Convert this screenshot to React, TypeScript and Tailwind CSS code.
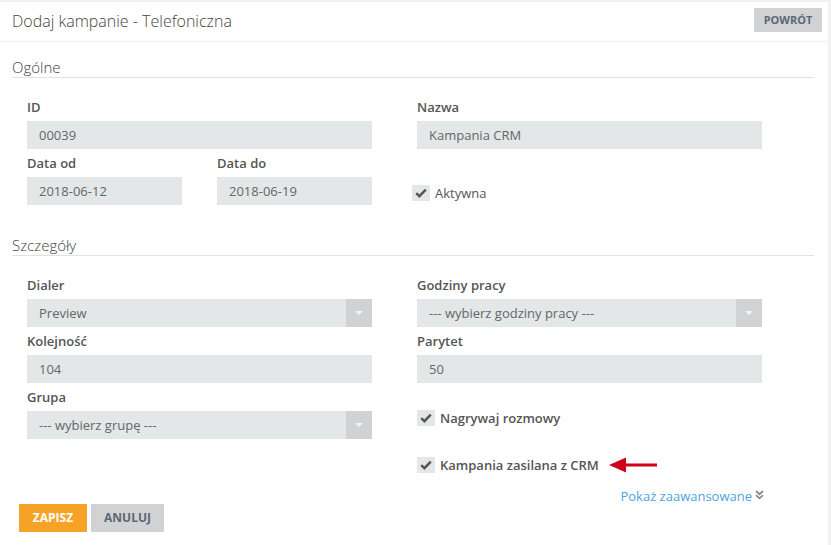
import React from "react";

const font = { fontFamily: '"Open Sans", "Noto Sans", sans-serif' };

function Check() {
  return (
    <svg width="12" height="10" viewBox="0 0 12 10" className="block">
      <path d="M1.2 5.2 L4.4 8.2 L10.8 1.6" fill="none" stroke="#555" strokeWidth="2.4" strokeLinecap="butt" strokeLinejoin="miter" />
    </svg>
  );
}

function Checkbox({ label, bold, shift }: { label: string; bold?: boolean; shift?: boolean }) {
  return (
    <div className={"flex h-[22px] items-center " + (shift ? "-ml-[5px]" : "")}>
      <div className="flex h-[16px] w-[18px] items-center justify-center bg-[#e4e7e8]">
        <Check />
      </div>
      <span className={"ml-[5px] pt-[1px] text-[13px] text-[#555] " + (bold ? "font-semibold" : "font-normal")}>{label}</span>
    </div>
  );
}

function Field({ label, value, select, w }: { label: string; value: string; select?: boolean; w?: string }) {
  return (
    <div className={"flex flex-col " + (w ?? "")}>
      <div className="flex h-[28px] items-center pt-[2px] text-[13px] font-semibold text-[#555]">{label}</div>
      <div className="flex h-[28px] items-center bg-[#e4e7e8]">
        <span className="flex-1 pl-[12px] pt-[2px] text-[13px] text-[#666]">{value}</span>
        {select && (
          <div className="flex h-[28px] w-[26px] items-center justify-center bg-[#d0d2d3]">
            <svg width="8" height="4" viewBox="0 0 8 4" className="block">
              <path d="M0 0 L8 0 L4 4 Z" fill="#f4f4f4" />
            </svg>
          </div>
        )}
      </div>
    </div>
  );
}

function Heading({ children }: { children: React.ReactNode }) {
  return (
    <div className="h-[21px] border-b border-[#e2e2e2] text-[15px] font-light leading-[20px] text-[#444]">{children}</div>
  );
}

export default function App() {
  return (
    <div className="flex min-h-[545px] bg-[#f1f1f1] pt-[2px]" style={font}>
      <div className="w-[828px] bg-white">
        <div className="flex h-[40px] items-start justify-between border-b border-[#f0f0f0] pl-[12px] pr-[6px] pt-[6px]">
          <div className="mt-[3px] text-[16px] font-light leading-[20px] text-[#444]">Dodaj kampanie - Telefoniczna</div>
          <button className="flex h-[24px] w-[68px] items-center justify-center bg-[#d1d2d3] text-[11px] font-bold text-[#5b6877]">
            POWRÓT
          </button>
        </div>

        <div className="pl-[12px] pr-[14px]">
          <div className="mt-[15px]">
            <Heading>Ogólne</Heading>
          </div>
          <div className="mt-[15px] grid grid-cols-[345px_345px] gap-x-[45px] pl-[15px]">
            <div className="flex flex-col">
              <Field label="ID" value="00039" />
              <div className="flex gap-[35px]">
                <Field label="Data od" value="2018-06-12" w="w-[155px]" />
                <Field label="Data do" value="2018-06-19" w="w-[155px]" />
              </div>
            </div>
            <div className="flex flex-col">
              <Field label="Nazwa" value="Kampania CRM" />
              <div className="mt-[33px]">
                <Checkbox label="Aktywna" shift />
              </div>
            </div>
          </div>

          <div className="mt-[30px]">
            <Heading>Szczegóły</Heading>
          </div>
          <div className="mt-[15px] grid grid-cols-[345px_345px] gap-x-[45px] pl-[15px]">
            <div className="flex flex-col">
              <Field label="Dialer" value="Preview" select />
              <Field label="Kolejność" value="104" />
              <Field label="Grupa" value="--- wybierz grupę ---" select />
            </div>
            <div className="flex flex-col">
              <Field label="Godziny pracy" value="--- wybierz godziny pracy ---" select />
              <Field label="Parytet" value="50" />
              <div className="mt-[24px]">
                <Checkbox label="Nagrywaj rozmowy" bold />
              </div>
              <div className="mt-[25px] flex items-center">
                <Checkbox label="Kampania zasilana z CRM" bold />
                <svg width="48" height="16" viewBox="0 0 48 16" className="ml-[10px] block">
                  <path d="M0 8 L17 0.5 L17 15.5 Z" fill="#d0021b" />
                  <rect x="16" y="6.5" width="32" height="3" fill="#d0021b" />
                </svg>
              </div>
              <div className="mt-[10px] -mr-[2px] flex h-[18px] items-center justify-end text-[13px] leading-[18px] text-[#4ea5dd]">
                <span className="pt-[1px]">Pokaż zaawansowane</span>
                <svg width="9" height="10" viewBox="0 0 9 10" className="ml-[3px] block">
                  <path d="M1 1 L4.5 4.2 L8 1 M1 5.2 L4.5 8.4 L8 5.2" fill="none" stroke="#8a8a8a" strokeWidth="1.8" />
                </svg>
              </div>
            </div>
          </div>

          <div className="flex gap-[4px] pl-[7px]">
            <button className="flex h-[28px] w-[68px] items-center justify-center bg-[#f6a227] text-[12px] font-bold text-white">
              ZAPISZ
            </button>
            <button className="flex h-[28px] w-[73px] items-center justify-center bg-[#d1d2d3] text-[12px] font-bold text-[#5b6877]">
              ANULUJ
            </button>
          </div>
        </div>
      </div>
    </div>
  );
}
